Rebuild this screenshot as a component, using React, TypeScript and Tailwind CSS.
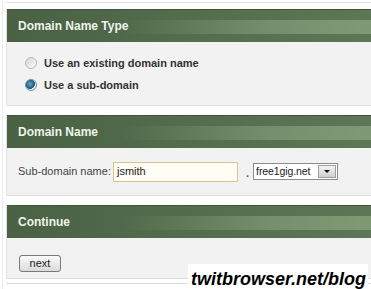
const headerBg =
  "[background:linear-gradient(to_right,rgba(150,180,140,0)_30%,rgba(150,180,140,0.45)_70%,rgba(150,180,140,0.6))_0_55%/100%_45%_no-repeat,linear-gradient(to_right,#4a6144,#56704f_60%,#5d7857)]";

function PanelHeader({ title }: { title: string }) {
  return (
    <div
      className={`h-[33px] flex items-center pl-[11px] text-[12px] font-bold text-[#eef4ea] border-t border-[#3f5539] ${headerBg}`}
    >
      {title}
    </div>
  );
}

function Radio({ checked }: { checked?: boolean }) {
  return (
    <span
      className={
        checked
          ? "w-[12px] h-[12px] rounded-full border border-[#6f8ea6] bg-[radial-gradient(circle_at_40%_40%,#5fa8c8,#1d5674_55%,#e8eef2_60%)] shrink-0"
          : "w-[12px] h-[12px] rounded-full border border-[#b9b9b9] bg-[linear-gradient(135deg,#d6d6d6,#fafafa)] shrink-0"
      }
    />
  );
}

export default function App() {
  return (
    <div
      className="relative w-[371px] h-[289px] overflow-hidden bg-white text-[#333]"
      style={{ fontFamily: '"Liberation Sans", Arial, sans-serif' }}
    >
      <div className="ml-[2px] h-full border-l border-[#ececec] pl-[3px]">
        <div className="h-[3px] border-b border-[#e2e2e2] mb-[6px]" />
        <div className="w-[380px] flex flex-col gap-[9px]">
          <div className="border-l border-[#e2e2e2]">
            <PanelHeader title="Domain Name Type" />
            <div className="h-[64px] bg-[#f2f2f2] border-b border-[#dedede] pt-[10px] pl-[18px]">
              <div className="h-[22px] flex items-center gap-[7px] text-[11px] font-bold">
                <Radio />
                <span>Use an existing domain name</span>
              </div>
              <div className="h-[22px] flex items-center gap-[7px] text-[11px] font-bold">
                <Radio checked />
                <span>Use a sub-domain</span>
              </div>
            </div>
          </div>

          <div className="border-l border-[#e2e2e2]">
            <PanelHeader title="Domain Name" />
            <div className="h-[48px] bg-[#f2f2f2] border-b border-[#dedede] pl-[11px] flex items-center text-[11px] text-[#444]">
              <span className="w-[95px]">Sub-domain name:</span>
              <div className="w-[125px] h-[20px] border border-[#d8c48c] bg-[#fffdf4] flex items-center pl-[3px] text-[#222]">
                jsmith
              </div>
              <span className="ml-[8px] mt-[4px] font-bold text-[#555]">.</span>
              <div className="ml-[4px] w-[85px] h-[17px] border border-[#8c8c8c] bg-white flex items-center justify-between pl-[2px] pr-[1px] text-[#222]">
                <span className="text-[10.5px] tracking-[-0.1px]">free1gig.net</span>
                <span className="w-[18px] h-[13px] border border-[#a0a0a0] bg-[linear-gradient(#f4f4f4,#cfcfcf)] flex items-center justify-center">
                  <span className="w-0 h-0 border-l-[3px] border-r-[3px] border-t-[3px] border-l-transparent border-r-transparent border-t-[#111]" />
                </span>
              </div>
            </div>
          </div>

          <div className="border-l border-[#e2e2e2]">
            <PanelHeader title="Continue" />
            <div className="h-[41px] bg-[#f2f2f2] border-b border-[#dedede] pl-[12px] pt-[12px]">
              <button className="w-[42px] h-[17px] rounded-[3px] border border-[#7a7a7a] bg-[linear-gradient(#fbfbfb,#dadada)] text-[11px] text-[#222] leading-none">
                next
              </button>
            </div>
          </div>
        </div>
        <div className="mt-[4px] w-[380px] border-t border-[#dcdcdc]" />
      </div>

      <div className="absolute left-[188px] top-[264px] w-[180px] h-[25px] bg-white flex items-end pl-[3px] pb-[1px]">
        <span className="text-[18px] font-bold italic text-black leading-none">twitbrowser.net/blog</span>
      </div>
    </div>
  );
}
